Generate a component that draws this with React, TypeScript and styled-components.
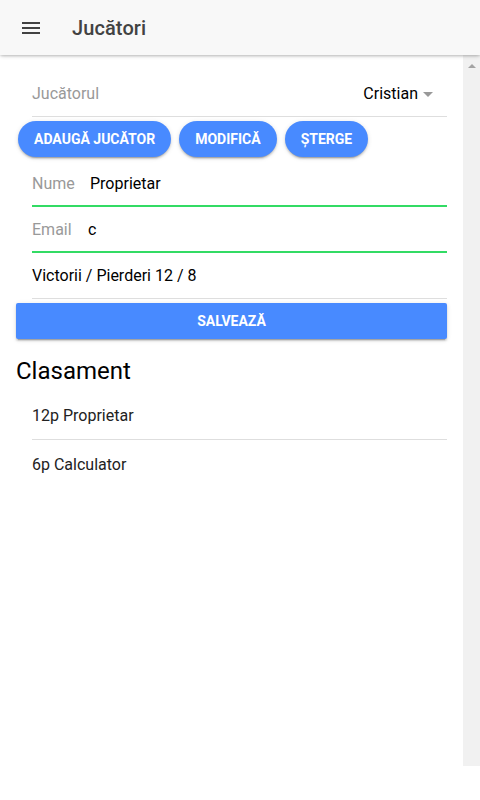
import React from "react";
import styled, { createGlobalStyle } from "styled-components";

const Global = createGlobalStyle`
  html, body { margin: 0; padding: 0; background: #fff; }
  body { font-family: Roboto, "Noto Sans", Arial, sans-serif; color: #000; }
  * { box-sizing: border-box; }
`;

const Page = styled.div`
  width: 480px;
  display: flex;
  flex-direction: column;
`;

const Header = styled.header`
  height: 55px;
  background: #f8f8f8;
  display: flex;
  align-items: center;
  padding-left: 22px;
  position: relative;
  z-index: 2;
  box-shadow: 0 2px 4px -1px rgba(0, 0, 0, 0.2), 0 1px 2px rgba(0, 0, 0, 0.12);
`;

const Menu = styled.div`
  width: 18px;
  display: flex;
  flex-direction: column;
  gap: 3px;
  margin-right: 32px;
  span {
    display: block;
    height: 2px;
    background: #424242;
  }
`;

const Title = styled.h1`
  margin: 0;
  font-size: 20px;
  font-weight: 500;
  color: #424242;
  letter-spacing: 0.1px;
`;

const Body = styled.div`
  height: 711px;
  display: flex;
`;

const Content = styled.main`
  flex: 1;
  padding: 16px 16px 0 16px;
  display: flex;
  flex-direction: column;
`;

const ScrollTrack = styled.div`
  width: 17px;
  background: #f1f1f1;
  display: flex;
  justify-content: center;
  padding-top: 9px;
`;

const UpArrow = styled.div`
  width: 0;
  height: 0;
  border-left: 4px solid transparent;
  border-right: 4px solid transparent;
  border-bottom: 4px solid #a3a3a3;
`;

const Item = styled.div<{ $line?: "plain" | "focus" }>`
  margin-left: 16px;
  height: 46px;
  display: flex;
  align-items: center;
  font-size: 16px;
  color: #000;
  border-bottom: ${(p) => (p.$line === "focus" ? "2px solid #32db64" : "1px solid #dedede")};
`;

const Label = styled.span<{ $w?: number }>`
  color: #999;
  font-size: 16px;
  width: ${(p) => (p.$w ? `${p.$w}px` : "auto")};
  flex: ${(p) => (p.$w ? "none" : "1")};
`;

const Value = styled.span`
  color: #000;
`;

const SelectValue = styled.span`
  display: flex;
  align-items: center;
  color: #000;
  margin-right: 14px;
  gap: 5px;
`;

const Caret = styled.span`
  width: 0;
  height: 0;
  border-left: 5px solid transparent;
  border-right: 5px solid transparent;
  border-top: 5px solid #999;
  margin-top: 1px;
`;

const ButtonBar = styled.div`
  display: flex;
  gap: 8px;
  padding-left: 2px;
  margin: 4px 0;
`;

const Pill = styled.button`
  height: 36px;
  padding: 0 16px;
  border: none;
  border-radius: 18px;
  background: #488aff;
  color: #fff;
  font-family: Roboto, Arial, sans-serif;
  font-weight: 700;
  font-size: 14px;
  text-transform: uppercase;
  box-shadow: 0 2px 2px 0 rgba(0, 0, 0, 0.14), 0 3px 1px -2px rgba(0, 0, 0, 0.2), 0 1px 5px 0 rgba(0, 0, 0, 0.12);
`;

const BlockButton = styled.button`
  margin-top: 4px;
  height: 36px;
  width: 100%;
  border: none;
  border-radius: 2px;
  background: #488aff;
  color: #fff;
  font-family: Roboto, Arial, sans-serif;
  font-weight: 700;
  font-size: 14px;
  box-shadow: 0 2px 2px 0 rgba(0, 0, 0, 0.14), 0 3px 1px -2px rgba(0, 0, 0, 0.2), 0 1px 5px 0 rgba(0, 0, 0, 0.12);
`;

const Heading = styled.h2`
  margin: 16px 0 5px 0;
  font-size: 24px;
  line-height: 32px;
  font-weight: 400;
  color: #000;
`;

const ListItem = styled.div<{ $last?: boolean }>`
  margin-left: 16px;
  height: 48px;
  display: flex;
  align-items: center;
  font-size: 16px;
  color: #222;
  border-bottom: ${(p) => (p.$last ? "none" : "1px solid #dedede")};
`;

export default function App() {
  return (
    <Page>
      <Global />
      <Header>
        <Menu>
          <span />
          <span />
          <span />
        </Menu>
        <Title>Jucători</Title>
      </Header>
      <Body>
        <Content>
          <Item>
            <Label>Jucătorul</Label>
            <SelectValue>
              Cristian <Caret />
            </SelectValue>
          </Item>
          <ButtonBar>
            <Pill>Adaugă jucător</Pill>
            <Pill>Modifică</Pill>
            <Pill>Șterge</Pill>
          </ButtonBar>
          <Item $line="focus">
            <Label $w={58}>Nume</Label>
            <Value>Proprietar</Value>
          </Item>
          <Item $line="focus">
            <Label $w={56}>Email</Label>
            <Value>c</Value>
          </Item>
          <Item>
            <Value>Victorii / Pierderi 12 / 8</Value>
          </Item>
          <BlockButton>SALVEAZĂ</BlockButton>
          <Heading>Clasament</Heading>
          <ListItem>12p Proprietar</ListItem>
          <ListItem $last>6p Calculator</ListItem>
        </Content>
        <ScrollTrack>
          <UpArrow />
        </ScrollTrack>
      </Body>
    </Page>
  );
}
